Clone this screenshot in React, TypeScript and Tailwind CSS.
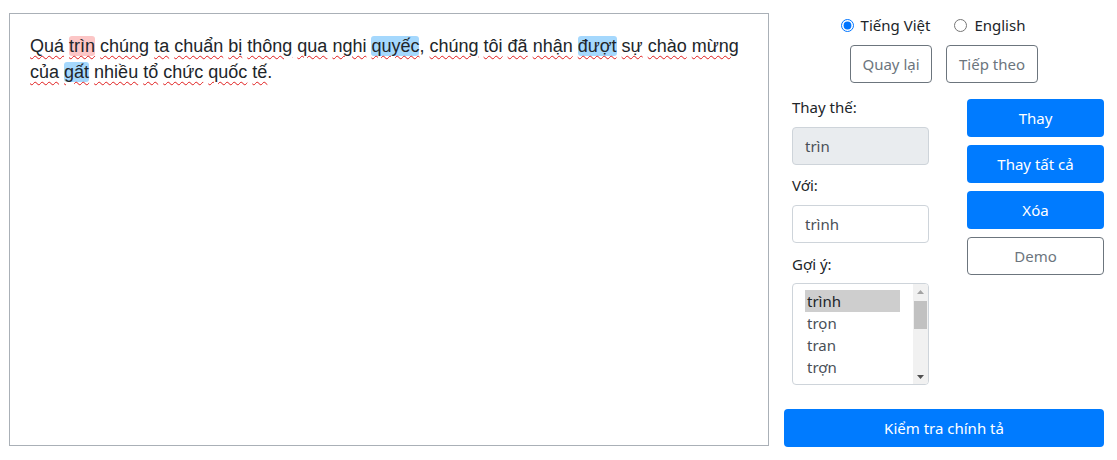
import React from "react";

const words: { w: string; hl?: "red" | "blue"; punct?: string }[] = [
  { w: "Quá" },
  { w: "trìn", hl: "red" },
  { w: "chúng" },
  { w: "ta" },
  { w: "chuẩn" },
  { w: "bị" },
  { w: "thông" },
  { w: "qua" },
  { w: "nghi" },
  { w: "quyếc", hl: "blue", punct: "," },
  { w: "chúng" },
  { w: "tôi" },
  { w: "đã" },
  { w: "nhận" },
  { w: "đượt", hl: "blue" },
  { w: "sự" },
  { w: "chào" },
  { w: "mừng" },
  { w: "của" },
  { w: "gất", hl: "blue" },
  { w: "nhiều" },
  { w: "tổ" },
  { w: "chức" },
  { w: "quốc" },
  { w: "tế", punct: "." },
];

const suggestions = ["trình", "trọn", "tran", "trợn", "trìn"];

const ui = { fontFamily: '"Noto Sans", "Open Sans", sans-serif' };

export default function App() {
  return (
    <div className="flex w-[1117px] h-[460px] bg-white pt-[13px] pl-[9px]">
      <div
        className="w-[760px] h-[433px] border border-[#aab0b7] pt-[19px] px-[20px] text-[18px] leading-[26px] text-[#212529]"
        style={{ fontFamily: '"Liberation Sans", Arial, sans-serif' }}
      >
        {words.map((it, i) => (
          <React.Fragment key={i}>
            <span
              className={
                "underline decoration-wavy decoration-[#e01b1b] decoration-1 underline-offset-[3px] " +
                (it.hl === "red"
                  ? "bg-[#fcc6c6] rounded-[3px]"
                  : it.hl === "blue"
                  ? "bg-[#a5d8fd] rounded-[3px]"
                  : "")
              }
            >
              {it.w}
            </span>
            {it.punct}
            {i < words.length - 1 ? " " : ""}
          </React.Fragment>
        ))}
      </div>

      <div className="ml-[15px] w-[320px] flex flex-col" style={ui}>
        <div className="h-[24px] flex items-center justify-center gap-[24px] text-[15px] text-[#212529] mr-[22px]">
          <label className="flex items-center gap-[7px]">
            <input type="radio" name="lang" defaultChecked className="w-[13px] h-[13px] m-0" />
            <span>Tiếng Việt</span>
          </label>
          <label className="flex items-center gap-[7px]">
            <input type="radio" name="lang" className="w-[13px] h-[13px] m-0" />
            <span>English</span>
          </label>
        </div>
        <div className="mt-[8px] flex justify-center gap-[14px] text-[15px]">
          <button className="w-[82px] h-[38px] border border-[#6c757d] rounded-[4px] text-[#6c757d]">
            Quay lại
          </button>
          <button className="w-[92px] h-[38px] border border-[#6c757d] rounded-[4px] text-[#6c757d]">
            Tiếp theo
          </button>
        </div>

        <div className="mt-[12px] flex pl-[8px] text-[15px]">
          <div className="w-[137px] flex flex-col">
            <div className="h-[24px] leading-[24px] text-[#212529]">Thay thế:</div>
            <div className="mt-[8px] h-[38px] rounded-[4px] border border-[#ced4da] bg-[#e9ecef] px-[12px] flex items-center text-[#495057]">
              trìn
            </div>
            <div className="mt-[8px] h-[24px] leading-[24px] text-[#212529]">Với:</div>
            <div className="mt-[8px] h-[38px] rounded-[4px] border border-[#ced4da] bg-white px-[12px] flex items-center text-[#495057]">
              trình
            </div>
            <div className="mt-[9px] h-[24px] leading-[24px] text-[#212529]">Gợi ý:</div>
            <div className="mt-[7px] h-[102px] rounded-[4px] border border-[#ced4da] bg-white flex overflow-hidden">
              <div className="flex-1 overflow-hidden pl-[12px] pr-[13px] pt-[6px] text-[#495057]">
                {suggestions.map((s, i) => (
                  <div
                    key={i}
                    className={
                      "h-[22px] leading-[22px] px-[2px] " +
                      (i === 0 ? "bg-[#cecece] text-[#212529]" : "")
                    }
                  >
                    {s}
                  </div>
                ))}
              </div>
              <div className="w-[15px] bg-[#f1f1f1] flex flex-col items-center">
                <div className="h-[15px] flex items-center justify-center">
                  <svg width="7" height="4" viewBox="0 0 7 4">
                    <polygon points="0,4 7,4 3.5,0" fill="#a3a3a3" />
                  </svg>
                </div>
                <div className="mt-[2px] w-[13px] h-[28px] bg-[#c1c1c1]" />
                <div className="flex-1" />
                <div className="h-[15px] flex items-center justify-center">
                  <svg width="7" height="4" viewBox="0 0 7 4">
                    <polygon points="0,0 7,0 3.5,4" fill="#505050" />
                  </svg>
                </div>
              </div>
            </div>
          </div>
          <div className="ml-[38px] w-[137px] flex flex-col gap-[8px] pt-[4px]">
            <button className="h-[38px] rounded-[4px] bg-[#007bff] text-white">Thay</button>
            <button className="h-[38px] rounded-[4px] bg-[#007bff] text-white">Thay tất cả</button>
            <button className="h-[38px] rounded-[4px] bg-[#007bff] text-white">Xóa</button>
            <button className="h-[38px] rounded-[4px] border border-[#6c757d] text-[#6c757d] bg-white">
              Demo
            </button>
          </div>
        </div>

        <button className="mt-[24px] h-[38px] w-[320px] rounded-[4px] bg-[#007bff] text-white text-[15px]">
          Kiểm tra chính tả
        </button>
      </div>
    </div>
  );
}
